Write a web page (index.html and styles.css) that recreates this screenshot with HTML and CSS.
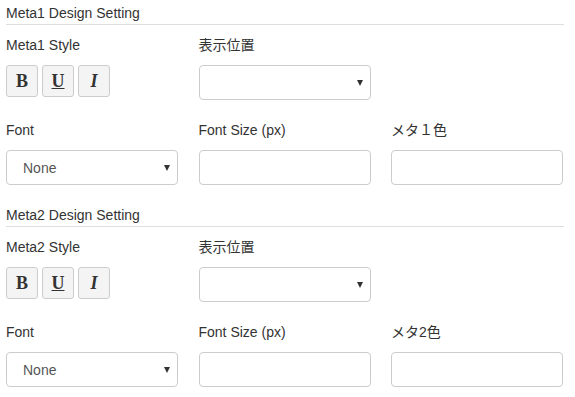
FILE: index.html
```html
<!DOCTYPE html>
<html lang="ja">
<head>
  <meta charset="UTF-8" />
  <title>Meta Design Setting</title>
  <link rel="stylesheet" href="styles.css">
</head>
<body>

<div class="section">
  <h3>Meta1 Design Setting</h3>
  <div class="row">
    <div class="field">
      <label>Meta1 Style</label>
      <div class="styles">
        <button class="style-btn b">B</button>
        <button class="style-btn u">U</button>
        <button class="style-btn i">I</button>
      </div>
    </div>
    <div class="field">
      <label>表示位置</label>
      <div class="select"><select></select></div>
    </div>
  </div>
  <div class="row">
    <div class="field">
      <label>Font</label>
      <div class="select"><select><option>None</option></select></div>
    </div>
    <div class="field">
      <label>Font Size (px)</label>
      <input type="text" />
    </div>
    <div class="field">
      <label>メタ１色</label>
      <input type="text" />
    </div>
  </div>
</div>

<div class="section">
  <h3>Meta2 Design Setting</h3>
  <div class="row">
    <div class="field">
      <label>Meta2 Style</label>
      <div class="styles">
        <button class="style-btn b">B</button>
        <button class="style-btn u">U</button>
        <button class="style-btn i">I</button>
      </div>
    </div>
    <div class="field">
      <label>表示位置</label>
      <div class="select"><select></select></div>
    </div>
  </div>
  <div class="row">
    <div class="field">
      <label>Font</label>
      <div class="select"><select><option>None</option></select></div>
    </div>
    <div class="field">
      <label>Font Size (px)</label>
      <input type="text" />
    </div>
    <div class="field">
      <label>メタ2色</label>
      <input type="text" />
    </div>
  </div>
</div>

</body>
</html>
```

FILE: styles.css
```css
* { box-sizing: border-box; }

body {
  margin: 0;
  padding: 0 11px 0 6px;
  font-family: 'Liberation Sans', Arial, 'Noto Sans CJK JP', sans-serif;
  font-size: 14px;
  color: #333;
  background: #fff;
}

.section {
  margin-bottom: 17px;
}

h3 {
  margin: 0 0 11px;
  padding: 4px 0 2px;
  font-size: 14px;
  font-weight: 400;
  line-height: 18px;
  border-bottom: 1px solid #ddd;
}

.row {
  display: grid;
  grid-template-columns: 172px 172px 172px;
  column-gap: 20.5px;
  margin-bottom: 21px;
}

.row:last-child { margin-bottom: 0; }

label {
  display: block;
  line-height: 18px;
  margin-bottom: 11px;
}

.styles {
  display: flex;
  gap: 4px;
}

.style-btn {
  width: 32px;
  height: 32px;
  padding: 0;
  font-family: 'Liberation Serif', 'Times New Roman', serif;
  font-size: 18px;
  font-weight: 700;
  color: #333;
  background: #f4f4f4;
  border: 1px solid #ccc;
  border-radius: 3px;
}

.style-btn.u { text-decoration: underline; }
.style-btn.i { font-style: italic; }

.select {
  position: relative;
}

.select::after {
  content: "";
  position: absolute;
  right: 8px;
  top: 15px;
  border-left: 3px solid transparent;
  border-right: 3px solid transparent;
  border-top: 6px solid #333;
  pointer-events: none;
}

select, input {
  display: block;
  width: 100%;
  height: 35px;
  margin: 0;
  font-family: inherit;
  font-size: 14px;
  color: #555;
  background: #fff;
  border: 1px solid #ccc;
  border-radius: 4px;
}

select {
  appearance: none;
  -webkit-appearance: none;
  padding: 0 0 0 16px;
}

input { padding: 0 12px; }
```
